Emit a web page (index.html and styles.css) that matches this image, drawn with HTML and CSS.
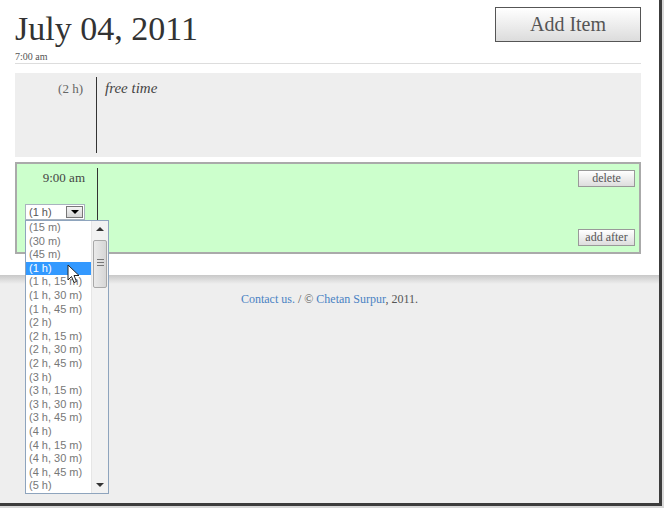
FILE: index.html
```html
<!DOCTYPE html>
<html lang="en">

<head>
    <meta charset="UTF-8">
    <meta name="viewport" content="width=device-width, initial-scale=1.0">
    <title>July 04, 2011</title>
    <link rel="stylesheet" href="styles.css">
</head>

<body>
    <div class="window">
        <div class="main">
            <div class="header">
                <div class="date-info">
                    <h1>July 04, 2011</h1>
                    <div class="start">7:00 am</div>
                </div>
                <button class="add-item">Add Item</button>
            </div>

            <div class="item free">
                <div class="when"><span class="duration">(2 h)</span></div>
                <div class="what"><em>free time</em></div>
            </div>

            <div class="item selected">
                <div class="when">
                    <div class="clock">9:00 am</div>
                    <div class="select-box">
                        <span class="select-value">(1 h)</span>
                        <span class="select-arrow"></span>
                    </div>
                </div>
                <div class="what"></div>
                <div class="actions">
                    <button class="small">delete</button>
                    <button class="small">add after</button>
                </div>

                <!-- open duration menu -->
                <div class="dropdown">
                    <ul class="options">
                        <li>(15 m)</li>
                        <li>(30 m)</li>
                        <li>(45 m)</li>
                        <li class="active">(1 h)</li>
                        <li>(1 h, 15 m)</li>
                        <li>(1 h, 30 m)</li>
                        <li>(1 h, 45 m)</li>
                        <li>(2 h)</li>
                        <li>(2 h, 15 m)</li>
                        <li>(2 h, 30 m)</li>
                        <li>(2 h, 45 m)</li>
                        <li>(3 h)</li>
                        <li>(3 h, 15 m)</li>
                        <li>(3 h, 30 m)</li>
                        <li>(3 h, 45 m)</li>
                        <li>(4 h)</li>
                        <li>(4 h, 15 m)</li>
                        <li>(4 h, 30 m)</li>
                        <li>(4 h, 45 m)</li>
                        <li>(5 h)</li>
                    </ul>
                    <div class="scrollbar">
                        <span class="arrow up"></span>
                        <span class="thumb"><span class="grip"></span></span>
                        <span class="arrow down"></span>
                    </div>
                </div>

                <svg class="cursor" width="13" height="20" viewBox="0 0 13 20">
                    <path d="M1 1 L1 16 L4.5 12.5 L7 18.5 L9.5 17.5 L7 11.5 L12 11.5 Z" fill="#fff" stroke="#222" stroke-width="1" stroke-linejoin="round"/>
                </svg>
            </div>
        </div>

        <div class="footer">
            <a href="#">Contact us.</a> / &copy; <a href="#">Chetan Surpur</a>, 2011.
        </div>
    </div>
</body>

</html>
```

FILE: styles.css
```css
body {
    margin: 0;
    background-color: #d8d8d8;
    font-family: "Liberation Serif", serif;
    color: #444;
}

.window {
    width: 659px;
    height: 503px;
    border-right: 3px solid #3c3c3c;
    border-bottom: 3px solid #3c3c3c;
    background: #eeeeee;
    overflow: hidden;
}

.main {
    background: #fff;
    height: 275px;
    box-sizing: border-box;
    padding: 0 18px 0 15px;
}

.header {
    display: flex;
    justify-content: space-between;
    align-items: flex-start;
    padding-top: 7px;
    border-bottom: 1px solid #dddddd;
}

h1 {
    margin: 4px 0 0;
    font-size: 34px;
    line-height: 36px;
    font-weight: normal;
    color: #333;
}

.start {
    margin-top: 3px;
    font-size: 10px;
    line-height: 13px;
    color: #555;
}

.add-item {
    width: 146px;
    height: 35px;
    border: 1px solid #555;
    background: linear-gradient(#ffffff, #dcdcdc);
    font-family: "Liberation Serif", serif;
    font-size: 20px;
    color: #555;
    padding: 0;
}

.item {
    display: flex;
    margin-top: 9px;
    background: #eeeeee;
    padding: 4px 0;
}

.item.free {
    height: 76px;
}

.when {
    width: 82px;
    box-sizing: border-box;
    border-right: 1px solid #333;
    text-align: right;
    padding-right: 13px;
}

.duration {
    display: block;
    padding-top: 4px;
    font-size: 13px;
    line-height: 16px;
    color: #666;
}

.what {
    flex: 1;
    padding: 2px 0 0 8px;
    font-size: 15px;
    line-height: 18px;
    color: #444;
}

.item.selected {
    position: relative;
    margin-top: 5px;
    background: #ccffcc;
    border: 2px solid #aaaaaa;
    padding: 4px 0 2px;
    height: 82px;
}

.selected .when {
    width: 81px;
    padding-right: 12px;
}

.clock {
    padding-top: 2px;
    font-size: 13px;
    line-height: 16px;
    color: #444;
}

.select-box {
    display: flex;
    align-items: center;
    justify-content: space-between;
    width: 60px;
    height: 16px;
    box-sizing: border-box;
    margin: 18px 0 0 8px;
    background: #fff;
    border: 1px solid #a9b3bf;
    text-align: left;
    font-family: "Liberation Sans", sans-serif;
    font-size: 11px;
    color: #555;
}

.select-value {
    padding-left: 3px;
}

.select-arrow {
    width: 17px;
    height: 12px;
    margin-right: 1px;
    box-sizing: border-box;
    border: 1px solid #777;
    background: linear-gradient(#f4f4f4, #d6d6d6);
    position: relative;
}

.select-arrow::after {
    content: "";
    position: absolute;
    left: 4px;
    top: 3px;
    border-left: 4px solid transparent;
    border-right: 4px solid transparent;
    border-top: 4px solid #000;
}

.actions {
    display: flex;
    flex-direction: column;
    justify-content: space-between;
    align-items: flex-end;
    margin: -4px 0 -2px;
    padding: 6px 4px;
}

.small {
    width: 57px;
    height: 17px;
    padding: 0;
    border: 1px solid #999;
    background: linear-gradient(#ffffff, #dddddd);
    font-family: "Liberation Serif", serif;
    font-size: 12px;
    color: #555;
}

.dropdown {
    position: absolute;
    left: 8px;
    top: 56px;
    width: 84px;
    height: 274px;
    box-sizing: border-box;
    border: 1px solid #8ea4bd;
    background: #fff;
    display: flex;
    z-index: 10;
}

.options {
    list-style: none;
    margin: 0;
    padding: 0;
    flex: 1;
    font-family: "Liberation Sans", sans-serif;
    font-size: 11px;
    color: #777;
}

.options li {
    height: 13.6px;
    line-height: 13.6px;
    padding-left: 3px;
    white-space: nowrap;
}

.options li.active {
    background: #3399ff;
    color: #fff;
}

.scrollbar {
    width: 16px;
    display: flex;
    flex-direction: column;
    background: #f2f2f2;
    border-left: 1px solid #e6e6e6;
}

.arrow {
    height: 18px;
    position: relative;
}

.arrow::after {
    content: "";
    position: absolute;
    left: 4px;
    border-left: 4px solid transparent;
    border-right: 4px solid transparent;
}

.arrow.up::after {
    top: 6px;
    border-bottom: 4px solid #333;
}

.arrow.down {
    margin-top: auto;
}

.arrow.down::after {
    top: 8px;
    border-top: 4px solid #333;
}

.thumb {
    height: 46px;
    margin: 1px 1px 0;
    border: 1px solid #a8a8a8;
    border-radius: 2px;
    background: linear-gradient(90deg, #eaeaea, #d6d6d6);
    position: relative;
}

.grip {
    position: absolute;
    left: 3px;
    top: 18px;
    width: 7px;
    height: 7px;
    background: repeating-linear-gradient(#777 0 1px, transparent 1px 3px);
}

.cursor {
    position: absolute;
    left: 50px;
    top: 100px;
    z-index: 20;
}

.footer {
    height: 228px;
    box-sizing: border-box;
    padding-top: 17px;
    background: linear-gradient(#c8c8c8, #eeeeee 9px);
    text-align: center;
    font-size: 12px;
    line-height: 14px;
    color: #555;
}

.footer a {
    color: #4a82c3;
    text-decoration: none;
}
```
